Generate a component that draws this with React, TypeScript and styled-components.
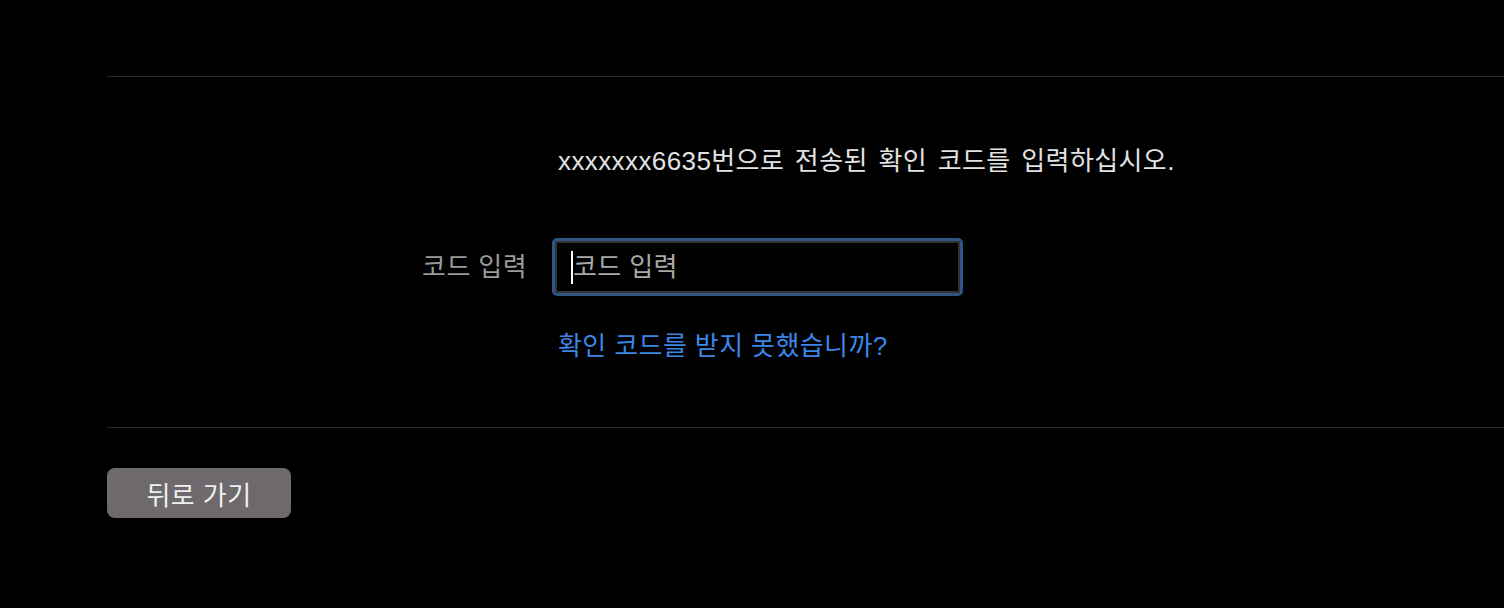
import styled, { createGlobalStyle } from "styled-components";

const GlobalStyle = createGlobalStyle`
  html, body {
    margin: 0;
    background: #000;
    font-family: "Liberation Sans", "Noto Sans CJK KR", sans-serif;
    letter-spacing: 0.4px;
  }
`;

const Page = styled.div`
  padding: 76px 0 0 107px;
  height: 608px;
  box-sizing: border-box;
`;

const Section = styled.section`
  border-top: 1px solid #2b2b2b;
  border-bottom: 1px solid #2b2b2b;
  padding: 68px 0 65px;
`;

const Form = styled.div`
  display: grid;
  grid-template-columns: 420px 460px;
  column-gap: 25px;
`;

const Message = styled.p`
  grid-column: 2;
  margin: 0 0 61px 6px;
  font-size: 26px;
  line-height: 32px;
  word-spacing: 3px;
  color: #e2e2e2;
  white-space: nowrap;
`;

const Label = styled.label`
  grid-column: 1;
  text-align: right;
  font-size: 26px;
  line-height: 58px;
  color: #9a9a9a;
`;

const Field = styled.div`
  grid-column: 2;
  position: relative;
  width: 411px;
  height: 58px;
`;

const CodeInput = styled.input`
  width: 100%;
  height: 100%;
  box-sizing: border-box;
  background: #000;
  border: 3px solid #2d5682;
  border-radius: 5px;
  box-shadow: inset 0 0 0 2px #333;
  outline: none;
  padding: 0 0 0 18px;
  font-family: inherit;
  font-size: 26px;
  letter-spacing: 0.4px;
  color: #ddd;
  caret-color: transparent;
  &::placeholder {
    color: #a9a9a9;
  }
`;

const Caret = styled.span`
  position: absolute;
  left: 19px;
  top: 13px;
  width: 2px;
  height: 33px;
  background: #fff;
  pointer-events: none;
`;

const HelpLink = styled.a`
  grid-column: 2;
  margin: 34px 0 0 6px;
  font-size: 26px;
  line-height: 32px;
  color: #3b86e6;
  text-decoration: none;
  white-space: nowrap;
  cursor: pointer;
`;

const Footer = styled.div`
  padding-top: 40px;
`;

const BackButton = styled.button`
  width: 184px;
  height: 50px;
  border: none;
  border-radius: 8px;
  background: #6d696c;
  color: #f0f0f0;
  font-family: inherit;
  font-size: 26px;
  letter-spacing: 0.4px;
  cursor: pointer;
`;

export default function App() {
  return (
    <>
      <GlobalStyle />
      <Page>
        <Section>
          <Form>
            <Message>xxxxxxx6635번으로 전송된 확인 코드를 입력하십시오.</Message>
            <Label htmlFor="code">코드 입력</Label>
            <Field>
              <CodeInput id="code" placeholder="코드 입력" autoFocus />
              <Caret />
            </Field>
            <HelpLink>확인 코드를 받지 못했습니까?</HelpLink>
          </Form>
        </Section>
        <Footer>
          <BackButton>뒤로 가기</BackButton>
        </Footer>
      </Page>
    </>
  );
}
